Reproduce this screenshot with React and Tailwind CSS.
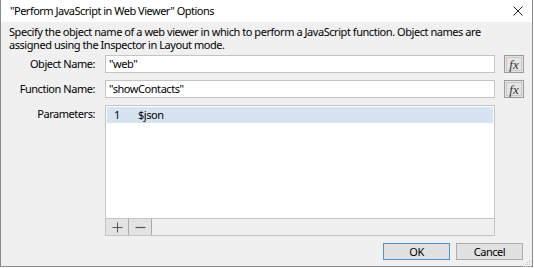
import React from 'react';

const font = { fontFamily: '"Noto Sans", "Open Sans", sans-serif' };

function FxButton() {
  return (
    <div className="ml-[9px] w-[20px] h-[18px] border border-[#9a9a9a] bg-[#e4e4e4] p-[1px]">
      <div className="w-full h-full border border-[#c8c8c8] flex items-center justify-center text-[13px] leading-none italic text-[#333] tracking-normal" style={{ fontFamily: '"Liberation Serif", serif' }}>
        fx
      </div>
    </div>
  );
}

function Field({ label, value }) {
  return (
    <div className="flex items-center h-[18px]">
      <div className="w-[104px] pr-[10px] text-right">{label}</div>
      <div className="w-[390px] h-[18px] border border-[#c4c4c4] bg-white flex items-center pl-[3px]">{value}</div>
      <FxButton />
    </div>
  );
}

export default function App() {
  return (
    <div className="w-[534px] h-[268px] bg-white text-[11px] leading-[12px] tracking-[-0.45px] text-black" style={font}>
      <div className="w-[533px] h-[267px] border-l border-r border-b border-[#8c8c8c] bg-[#f0f0f0] flex flex-col">
        <div className="h-[22px] shrink-0 bg-white flex items-center justify-between pl-[9px] pr-[9px] text-[11px] tracking-[-0.5px]">
          <span className="whitespace-nowrap">"Perform JavaScript in Web Viewer" Options</span>
          <svg width="10" height="10" viewBox="0 0 10 10">
            <path d="M0.5 0.5 L9.5 9.5 M9.5 0.5 L0.5 9.5" stroke="#222" strokeWidth="1" fill="none" />
          </svg>
        </div>

        <div className="pl-[8px] pt-[3px] pr-[10px] whitespace-nowrap leading-[13px]">
          <p>Specify the object name of a web viewer in which to perform a JavaScript function. Object names are</p>
          <p>assigned using the Inspector in Layout mode.</p>
        </div>

        <div className="mt-[4px] flex flex-col gap-[7px]">
          <Field label="Object Name:" value={'"web"'} />
          <Field label="Function Name:" value={'"showContacts"'} />
          <div className="flex items-start">
            <div className="w-[104px] pr-[10px] pt-[3px] text-right">Parameters:</div>
            <div className="w-[390px] h-[131px] border border-[#c4c4c4] bg-white flex flex-col">
              <div className="mx-[1px] mt-[1px] h-[16px] bg-[#d6e4f1] flex items-center">
                <span className="ml-[7px] w-[24px]">1</span>
                <span>$json</span>
              </div>
              <div className="flex-1" />
              <div className="h-[17px] border-t border-[#c4c4c4] bg-[#f0f0f0] flex">
                <button className="w-[23px] h-full border-r border-[#a9a9a9] bg-[#e3e3e3] flex items-center justify-center">
                  <svg width="11" height="11" viewBox="0 0 11 11">
                    <path d="M5.5 0.5 V10.5 M0.5 5.5 H10.5" stroke="#555" strokeWidth="1" />
                  </svg>
                </button>
                <button className="w-[23px] h-full border-r border-[#a9a9a9] bg-[#e3e3e3] flex items-center justify-center">
                  <svg width="11" height="11" viewBox="0 0 11 11">
                    <path d="M0.5 5.5 H10.5" stroke="#555" strokeWidth="1.2" />
                  </svg>
                </button>
              </div>
            </div>
          </div>
        </div>

        <div className="mt-[7px] flex justify-end pr-[9px] gap-[6px]">
          <button className="w-[67px] h-[17px] border border-[#4c93d3] bg-[#e1e1e1] flex items-center justify-center">OK</button>
          <button className="w-[67px] h-[17px] border border-[#adadad] bg-[#e1e1e1] flex items-center justify-center">Cancel</button>
        </div>

        <div className="flex-1 flex justify-end items-end pr-[1px] pb-[1px]">
          <svg width="8" height="8" viewBox="0 0 8 8">
            <rect x="6" y="0" width="1" height="1" fill="#c8c8c8" />
            <rect x="4" y="2" width="1" height="1" fill="#c8c8c8" />
            <rect x="6" y="2" width="1" height="1" fill="#c8c8c8" />
            <rect x="2" y="4" width="1" height="1" fill="#c8c8c8" />
            <rect x="4" y="4" width="1" height="1" fill="#c8c8c8" />
            <rect x="6" y="4" width="1" height="1" fill="#c8c8c8" />
            <rect x="0" y="6" width="1" height="1" fill="#c8c8c8" />
            <rect x="2" y="6" width="1" height="1" fill="#c8c8c8" />
            <rect x="4" y="6" width="1" height="1" fill="#c8c8c8" />
            <rect x="6" y="6" width="1" height="1" fill="#c8c8c8" />
          </svg>
        </div>
      </div>
    </div>
  );
}
